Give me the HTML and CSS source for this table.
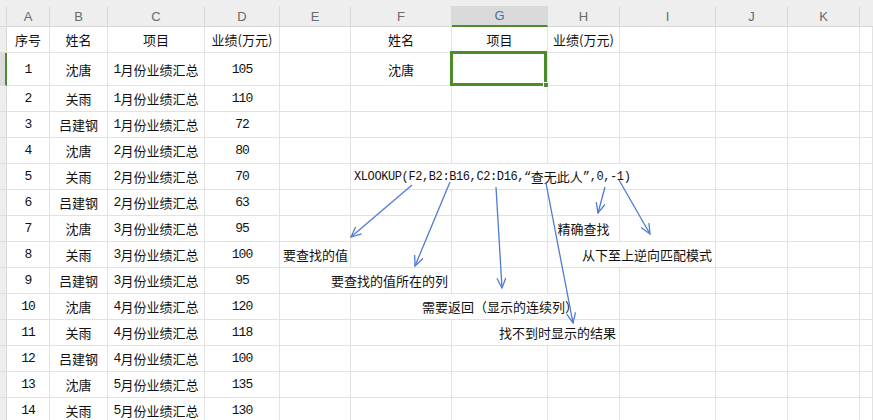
FILE: index.html
```html
<!DOCTYPE html>
<html lang="zh">
<head>
<meta charset="utf-8">
<title>XLOOKUP</title>
<link rel="stylesheet" href="styles.css">
</head>
<body>
<div class="topband"></div>
<div class="sheet">
  <!-- column headers -->
  <div class="ch corner"></div>
  <div class="ch">A</div><div class="ch">B</div><div class="ch">C</div><div class="ch">D</div>
  <div class="ch">E</div><div class="ch">F</div><div class="ch sel">G</div><div class="ch">H</div>
  <div class="ch">I</div><div class="ch">J</div><div class="ch">K</div><div class="ch last"></div>

  <!-- row 1 -->
  <div class="rh"></div>
  <div class="c">序号</div><div class="c">姓名</div><div class="c">项目</div><div class="c">业绩(万元)</div>
  <div class="c"></div><div class="c">姓名</div><div class="c">项目</div><div class="c">业绩(万元)</div>
  <div class="c"></div><div class="c"></div><div class="c"></div><div class="c"></div>

  <!-- row 2 -->
  <div class="rh on"></div>
  <div class="c n">1</div><div class="c">沈唐</div><div class="c"><span class="n">1</span>月份业绩汇总</div><div class="c n">105</div>
  <div class="c"></div><div class="c">沈唐</div><div class="c active"><span class="box"><span class="handle"></span></span></div><div class="c"></div>
  <div class="c"></div><div class="c"></div><div class="c"></div><div class="c"></div>

  <!-- row 3 -->
  <div class="rh"></div>
  <div class="c n">2</div><div class="c">关雨</div><div class="c"><span class="n">1</span>月份业绩汇总</div><div class="c n">110</div>
  <div class="c"></div><div class="c"></div><div class="c"></div><div class="c"></div>
  <div class="c"></div><div class="c"></div><div class="c"></div><div class="c"></div>

  <!-- row 4 -->
  <div class="rh"></div>
  <div class="c n">3</div><div class="c">吕建钢</div><div class="c"><span class="n">1</span>月份业绩汇总</div><div class="c n">72</div>
  <div class="c"></div><div class="c"></div><div class="c"></div><div class="c"></div>
  <div class="c"></div><div class="c"></div><div class="c"></div><div class="c"></div>

  <!-- row 5 -->
  <div class="rh"></div>
  <div class="c n">4</div><div class="c">沈唐</div><div class="c"><span class="n">2</span>月份业绩汇总</div><div class="c n">80</div>
  <div class="c"></div><div class="c"></div><div class="c"></div><div class="c"></div>
  <div class="c"></div><div class="c"></div><div class="c"></div><div class="c"></div>

  <!-- row 6 : formula -->
  <div class="rh"></div>
  <div class="c n">5</div><div class="c">关雨</div><div class="c"><span class="n">2</span>月份业绩汇总</div><div class="c n">70</div>
  <div class="c"></div>
  <div class="c l span4 formula"><span class="m">XLOOKUP(F2,B2:B16,C2:D16,“</span>查无此人<span class="m">”,0,-1)</span></div>
  <div class="c"></div><div class="c"></div><div class="c"></div>

  <!-- row 7 -->
  <div class="rh"></div>
  <div class="c n">6</div><div class="c">吕建钢</div><div class="c"><span class="n">2</span>月份业绩汇总</div><div class="c n">63</div>
  <div class="c"></div><div class="c"></div><div class="c"></div><div class="c"></div>
  <div class="c"></div><div class="c"></div><div class="c"></div><div class="c"></div>

  <!-- row 8 -->
  <div class="rh"></div>
  <div class="c n">7</div><div class="c">沈唐</div><div class="c"><span class="n">3</span>月份业绩汇总</div><div class="c n">95</div>
  <div class="c"></div><div class="c"></div><div class="c"></div><div class="c">精确查找</div>
  <div class="c"></div><div class="c"></div><div class="c"></div><div class="c"></div>

  <!-- row 9 -->
  <div class="rh"></div>
  <div class="c n">8</div><div class="c">关雨</div><div class="c"><span class="n">3</span>月份业绩汇总</div><div class="c n">100</div>
  <div class="c l">要查找的值</div><div class="c"></div><div class="c"></div>
  <div class="c r span2">从下至上逆向匹配模式</div>
  <div class="c"></div><div class="c"></div><div class="c"></div>

  <!-- row 10 -->
  <div class="rh"></div>
  <div class="c n">9</div><div class="c">吕建钢</div><div class="c"><span class="n">3</span>月份业绩汇总</div><div class="c n">95</div>
  <div class="c r span2">要查找的值所在的列</div><div class="c"></div><div class="c"></div>
  <div class="c"></div><div class="c"></div><div class="c"></div><div class="c"></div>

  <!-- row 11 -->
  <div class="rh"></div>
  <div class="c n">10</div><div class="c">沈唐</div><div class="c"><span class="n">4</span>月份业绩汇总</div><div class="c n">120</div>
  <div class="c"></div>
  <div class="c span3 shift">需要返回（显示的连续列）</div>
  <div class="c"></div><div class="c"></div><div class="c"></div><div class="c"></div>

  <!-- row 12 -->
  <div class="rh"></div>
  <div class="c n">11</div><div class="c">关雨</div><div class="c"><span class="n">4</span>月份业绩汇总</div><div class="c n">118</div>
  <div class="c"></div><div class="c"></div>
  <div class="c r span2">找不到时显示的结果</div>
  <div class="c"></div><div class="c"></div><div class="c"></div><div class="c"></div>

  <!-- row 13 -->
  <div class="rh"></div>
  <div class="c n">12</div><div class="c">吕建钢</div><div class="c"><span class="n">4</span>月份业绩汇总</div><div class="c n">100</div>
  <div class="c"></div><div class="c"></div><div class="c"></div><div class="c"></div>
  <div class="c"></div><div class="c"></div><div class="c"></div><div class="c"></div>

  <!-- row 14 -->
  <div class="rh"></div>
  <div class="c n">13</div><div class="c">沈唐</div><div class="c"><span class="n">5</span>月份业绩汇总</div><div class="c n">135</div>
  <div class="c"></div><div class="c"></div><div class="c"></div><div class="c"></div>
  <div class="c"></div><div class="c"></div><div class="c"></div><div class="c"></div>

  <!-- row 15 -->
  <div class="rh"></div>
  <div class="c n">14</div><div class="c">关雨</div><div class="c"><span class="n">5</span>月份业绩汇总</div><div class="c n">130</div>
  <div class="c"></div><div class="c"></div><div class="c"></div><div class="c"></div>
  <div class="c"></div><div class="c"></div><div class="c"></div><div class="c"></div>
</div>

<svg class="arrows" width="873" height="420" viewBox="0 0 873 420" xmlns="http://www.w3.org/2000/svg">
  <defs>
    <marker id="ah" markerUnits="userSpaceOnUse" markerWidth="14" markerHeight="12" refX="11" refY="5" orient="auto">
      <path d="M1,0.5 L11,5 L1,9.5" fill="none" stroke="#4f7bd4" stroke-width="1.3"/>
    </marker>
  </defs>
  <g stroke="#4f7bd4" stroke-width="1.3" fill="none" marker-end="url(#ah)">
    <line x1="412" y1="185" x2="351" y2="237"/>
    <line x1="450" y1="182" x2="415" y2="266"/>
    <line x1="496" y1="187" x2="502" y2="288"/>
    <line x1="546" y1="183" x2="573" y2="323"/>
    <line x1="605" y1="187" x2="598" y2="213"/>
    <line x1="619" y1="180" x2="650" y2="234"/>
  </g>
</svg>
</body>
</html>
```

FILE: styles.css
```css
html, body {
  margin: 0;
  padding: 0;
  background: #ffffff;
  overflow: hidden;
}
body {
  position: relative;
  width: 873px;
  height: 420px;
  font-family: "Noto Sans CJK SC", "Noto Sans", sans-serif;
  font-size: 13px;
  color: #111111;
}
.topband {
  height: 6px;
  background: #eeeeee;
}
.sheet {
  display: grid;
  grid-template-columns: 7px 43px 58px 97px 75px 71px 101px 96px 72px 96px 72px 72px 1fr;
  grid-template-rows: 21px 26px 33px;
  grid-auto-rows: 26px;
}
.ch {
  box-sizing: border-box;
  background: #eeeeee;
  border-right: 1px solid #d9d9d9;
  border-bottom: 1px solid #d6d6d6;
  display: flex;
  align-items: center;
  justify-content: center;
  font-family: "Liberation Sans", "Noto Sans", sans-serif;
  font-size: 13px;
  color: #6a6a6a;
}
.ch.sel {
  background: #dadada;
  color: #4a6aa8;
  border-bottom: 2px solid #4b8c2b;
}
.ch.last { border-right: none; }
.rh {
  box-sizing: border-box;
  background: #eeeeee;
  border-right: 1px solid #d9d9d9;
  border-bottom: 1px solid #dddddd;
}
.rh.on {
  background: #dcdcdc;
  border-right: 2px solid #4b8c2b;
}
.c {
  box-sizing: border-box;
  border-right: 1px solid #e2e2e2;
  border-bottom: 1px solid #e2e2e2;
  display: flex;
  align-items: center;
  justify-content: center;
  white-space: nowrap;
  min-width: 0;
}
.c.l { justify-content: flex-start; padding-left: 3px; }
.c.r { justify-content: flex-end; padding-right: 3px; }
.span2 { grid-column: span 2; }
.span3 { grid-column: span 3; }
.span4 { grid-column: span 4; }
.shift { padding-left: 30px; }
.n, .c.n {
  font-family: "Liberation Mono", monospace;
  font-size: 13px;
  letter-spacing: -1px;
}
.formula { padding-left: 3px; }
.m {
  font-family: "Liberation Mono", monospace;
  font-size: 12px;
  letter-spacing: -0.4px;
}
.active { position: relative; }
.box {
  position: absolute;
  left: -2px;
  top: -2px;
  width: 97px;
  height: 35px;
  box-sizing: border-box;
  border: 3px solid #4b8c2b;
}
.handle {
  position: absolute;
  right: -5px;
  bottom: -5px;
  width: 6px;
  height: 6px;
  background: #4b8c2b;
  border: 1px solid #ffffff;
  box-sizing: border-box;
}
.arrows {
  position: absolute;
  left: 0;
  top: 0;
  pointer-events: none;
}
```
